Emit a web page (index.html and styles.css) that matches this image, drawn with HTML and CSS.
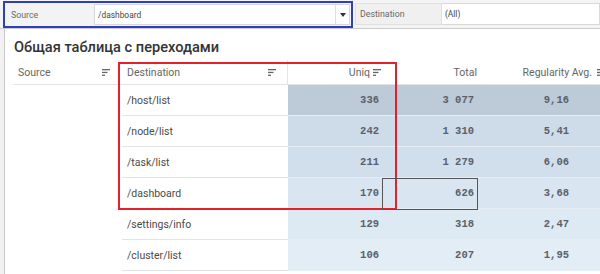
FILE: index.html
```html
<!DOCTYPE html>
<html lang="ru">
<head>
<meta charset="utf-8">
<link rel="stylesheet" href="styles.css">
</head>
<body>
<div class="topbar">
  <div class="filter active">
    <div class="flabel">Source</div>
    <div class="finput"><span class="fval">/dashboard</span><span class="arrow"><svg width="6" height="4" viewBox="0 0 6 4"><path d="M0 0H6L3 4Z" fill="#333"/></svg></span></div>
  </div>
  <div class="filter second">
    <div class="flabel">Destination</div>
    <div class="finput"><span class="fval">(All)</span></div>
  </div>
</div>
<div class="panel">
  <div class="title">Общая таблица с переходами</div>
  <div class="grid head">
    <div class="h h1"><span>Source</span><svg class="sort" viewBox="0 0 8 7"><rect x="0" y="0" width="8" height="1.3"/><rect x="0" y="2.8" width="5.5" height="1.3"/><rect x="0" y="5.6" width="3" height="1.3"/></svg></div>
    <div class="h h2"><span>Destination</span><svg class="sort" viewBox="0 0 8 7"><rect x="0" y="0" width="8" height="1.3"/><rect x="0" y="2.8" width="5.5" height="1.3"/><rect x="0" y="5.6" width="3" height="1.3"/></svg></div>
    <div class="h h3"><span>Uniq</span><svg class="sort" viewBox="0 0 8 7"><rect x="0" y="0" width="8" height="1.3"/><rect x="0" y="2.8" width="5.5" height="1.3"/><rect x="0" y="5.6" width="3" height="1.3"/></svg></div>
    <div class="h h4"><span>Total</span></div>
    <div class="h h5"><span>Regularity Avg.</span><svg class="sort" viewBox="0 0 8 7"><rect x="0" y="0" width="8" height="1.3"/><rect x="0" y="2.8" width="5.5" height="1.3"/><rect x="0" y="5.6" width="3" height="1.3"/></svg></div>
  </div>
  <div class="grid row r1"><div class="src"></div><div class="dest">/host/list</div><div class="num n3">336</div><div class="num n4">3 077</div><div class="num n5">9,16</div></div>
  <div class="grid row r2"><div class="src"></div><div class="dest">/node/list</div><div class="num n3">242</div><div class="num n4">1 310</div><div class="num n5">5,41</div></div>
  <div class="grid row r3"><div class="src"></div><div class="dest">/task/list</div><div class="num n3">211</div><div class="num n4">1 279</div><div class="num n5">6,06</div></div>
  <div class="grid row r4"><div class="src"></div><div class="dest">/dashboard</div><div class="num n3">170</div><div class="num n4">626</div><div class="num n5">3,68</div></div>
  <div class="grid row r5"><div class="src"></div><div class="dest">/settings/info</div><div class="num n3">129</div><div class="num n4">318</div><div class="num n5">2,47</div></div>
  <div class="grid row r6"><div class="src"></div><div class="dest">/cluster/list</div><div class="num n3">106</div><div class="num n4">207</div><div class="num n5">1,95</div></div>
</div>
<div class="mark-red"></div>
<div class="mark-cell"></div>
</body>
</html>
```

FILE: styles.css
```css
html, body {
  margin: 0;
  padding: 0;
}
body {
  width: 600px;
  height: 274px;
  overflow: hidden;
  position: relative;
  background: #f1f1f1;
  font-family: Roboto, "Noto Sans", Arial, sans-serif;
}
.topbar {
  height: 29px;
  box-sizing: border-box;
  display: flex;
  align-items: flex-start;
  padding: 1px 0 0 3px;
  gap: 2px;
  background: #f4f4f4;
  border-bottom: 1px solid #cbcbcb;
}
.filter {
  display: flex;
  box-sizing: border-box;
}
.filter.active {
  width: 350px;
  height: 27px;
  border: 2px solid #2f3ec0;
  background: #f3f3f3;
}
.filter.second {
  flex: 1;
  height: 22px;
  margin-top: 2px;
}
.flabel {
  display: flex;
  align-items: center;
  font-size: 8.8px;
  color: #6a6a6a;
  box-sizing: border-box;
}
.active .flabel {
  width: 89px;
  padding-left: 6px;
}
.second .flabel {
  width: 87px;
  padding-left: 4px;
  background: #f0f0f0;
  border: 1px solid #e0e0e0;
}
.finput {
  flex: 1;
  display: flex;
  align-items: center;
  background: #fff;
  border: 1px solid #d9d9d9;
  box-sizing: border-box;
  font-size: 8.4px;
  color: #444;
  padding-left: 3px;
}
.active .finput {
  margin: 1px 1px 1px 0;
}
.second .finput {
  border-left: none;
}
.arrow {
  margin-left: auto;
  width: 13px;
  height: 100%;
  border-left: 1px solid #e0e0e0;
  display: flex;
  align-items: center;
  justify-content: center;
}
.panel {
  margin-left: 4px;
  border-left: 1px solid #c9c9c9;
  background: #fff;
  height: 245px;
  padding-left: 8px;
}
.title {
  padding: 9px 0 0 1px;
  font-size: 14.6px;
  line-height: 18px;
  font-weight: 500;
  color: #333;
}
.grid {
  display: grid;
  grid-template-columns: 105px 170px 94px 95px 130px;
}
.head {
  margin-top: 4px;
  height: 25px;
  box-sizing: border-box;
  border-bottom: 1px solid #e2e2e2;
  font-size: 10.5px;
  color: #666;
}
.h {
  display: flex;
  align-items: center;
  white-space: nowrap;
}
.sort {
  width: 8px;
  height: 7px;
  fill: #666;
  flex: none;
}
.h1 {
  justify-content: space-between;
  padding: 0 8px 0 5px;
}
.h2 {
  justify-content: space-between;
  padding: 0 11px 0 9px;
  border-right: 1px solid #e4e4e4;
}
.h3 {
  justify-content: flex-end;
  gap: 3px;
  padding-right: 1px;
}
.h4 {
  justify-content: flex-end;
  padding-right: 0;
}
.h5 {
  justify-content: flex-end;
  gap: 5px;
  padding-right: 2px;
}
.row {
  height: 31px;
}
.dest {
  margin-left: 4px;
  padding-left: 5px;
  border-bottom: 1px solid #e3e3e3;
  display: flex;
  align-items: center;
  font-size: 10.5px;
  color: #4a4a4a;
}
.num {
  display: flex;
  align-items: center;
  justify-content: flex-end;
  font-family: "Liberation Mono", "DejaVu Sans Mono", monospace;
  font-weight: bold;
  font-size: 10.5px;
  color: #5a616a;
  border-bottom: 1px solid #e6edf3;
}
.n3 { padding-right: 3px; }
.n4 { padding-right: 3px; }
.n5 { padding-right: 38px; }
.r1 .num { background: #bdcad7; }
.r2 .num { background: #cedcea; }
.r3 .num { background: #d1dfec; }
.r4 .num { background: #d9e6f1; }
.r5 .num { background: #dde9f3; }
.r6 .num { background: #e2edf6; }
.mark-red {
  position: absolute;
  left: 118px;
  top: 62px;
  width: 279px;
  height: 148px;
  box-sizing: border-box;
  border: 2px solid #e3202b;
}
.mark-cell {
  position: absolute;
  left: 382px;
  top: 178px;
  width: 96px;
  height: 32px;
  box-sizing: border-box;
  border: 1px solid #555;
}
```
